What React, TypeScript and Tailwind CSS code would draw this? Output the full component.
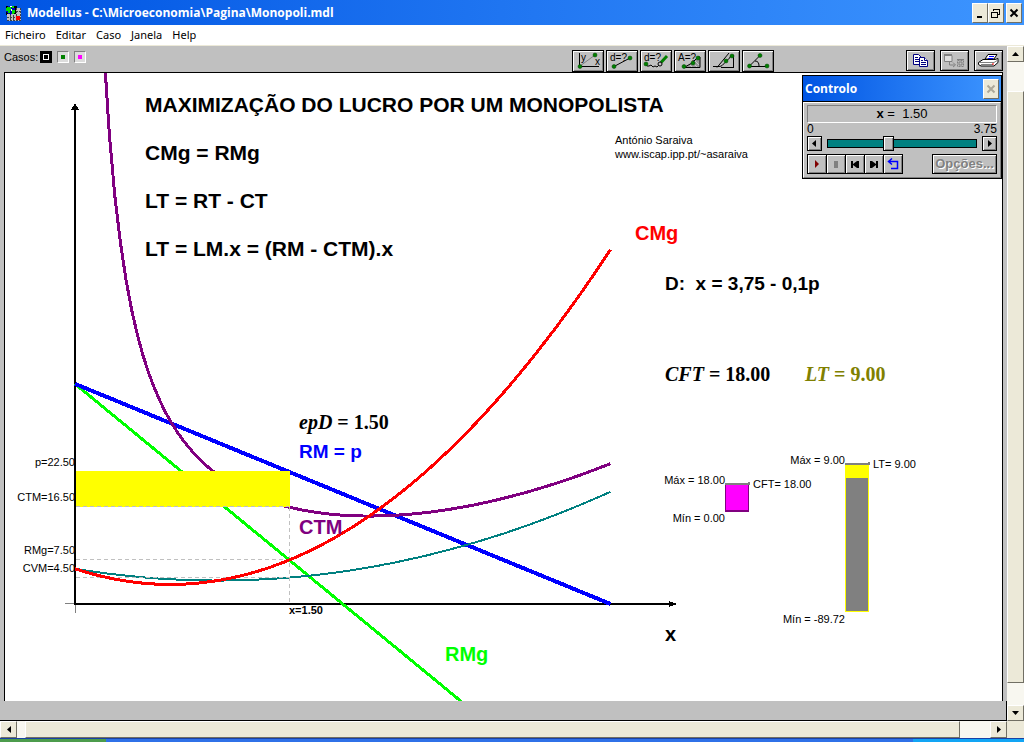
import React, { useState } from 'react'
import clsx from 'clsx'

const raised = 'border border-t-white border-l-white border-r-[#716f64] border-b-[#716f64] bg-[#ece9d8]'
const greyButton =
  'flex shrink-0 items-center justify-center border border-black bg-[#c0c0c0] shadow-[inset_1px_1px_0_#fff,inset_-1px_-1px_0_#808080]'

const menus = ['Ficheiro', 'Editar', 'Caso', 'Janela', 'Help']

// chart scale: pixels per unit and the position of the origin
const X0 = 75
const Y0 = 604
const SX = 142.8
const SY = 5.87

const plot = (fn: (x: number) => number, from: number, to: number) => {
  const points: string[] = []
  const steps = 90
  for (let i = 0; i <= steps; i++) {
    const x = from + ((to - from) * i) / steps
    points.push(`${(X0 + x * SX).toFixed(1)},${(Y0 - fn(x) * SY).toFixed(1)}`)
  }
  return points.join(' ')
}

const price = (x: number) => 37.5 - 10 * x
const marginalRevenue = (x: number) => 37.5 - 20 * x
const variableCost = (x: number) => 2 * x * x - 4 * x + 6
const totalCost = (x: number) => variableCost(x) + 18 / x
const marginalCost = (x: number) => 6 * x * x - 8 * x + 6

const headings = [
  { text: 'MAXIMIZAÇÃO DO LUCRO POR UM MONOPOLISTA', className: 'left-[140px] top-5 text-[21px] text-black' },
  { text: 'CMg = RMg', className: 'left-[140px] top-[68px] text-[21px] text-black' },
  { text: 'LT = RT - CT', className: 'left-[140px] top-[116px] text-[21px] text-black' },
  { text: 'LT = LM.x = (RM - CTM).x', className: 'left-[140px] top-[164px] text-[21px] text-black' },
  { text: 'CMg', className: 'left-[630px] top-[148px] text-[20px] text-[#ff0000]' },
  { text: 'D:  x = 3,75 - 0,1p', className: 'left-[660px] top-[199px] text-[19px] text-black' },
  { text: 'RM = p', className: 'left-[294px] top-[367px] text-[19px] text-[#0000ff]' },
  { text: 'CTM', className: 'left-[294px] top-[442px] text-[20px] text-[#800080]' },
  { text: 'RMg', className: 'left-[440px] top-[569px] text-[20px] text-[#00ff00]' },
  { text: 'x', className: 'left-[660px] top-[549px] text-[20px] text-black' },
]

const readouts = [
  { name: 'CFT', value: '18.00', className: 'left-[660px] top-[289px] text-black' },
  { name: 'LT', value: '9.00', className: 'left-[800px] top-[289px] text-[#808000]' },
  { name: 'epD', value: '1.50', className: 'left-[294px] top-[337px] text-black' },
]

const labels = [
  { text: 'António Saraiva', className: 'left-[610px] top-[61px]' },
  { text: 'www.iscap.ipp.pt/~asaraiva', className: 'left-[610px] top-[75px]' },
  { text: 'p=22.50', className: 'left-0 top-[383px] w-[70px] text-right' },
  { text: 'CTM=16.50', className: 'left-0 top-[418px] w-[70px] text-right' },
  { text: 'RMg=7.50', className: 'left-0 top-[471px] w-[70px] text-right' },
  { text: 'CVM=4.50', className: 'left-0 top-[489px] w-[70px] text-right' },
  { text: 'x=1.50', className: 'left-[284px] top-[531px] font-bold' },
  { text: 'Máx = 18.00', className: 'left-[620px] top-[401px] w-[100px] text-right' },
  { text: 'CFT= 18.00', className: 'left-[748px] top-[405px]' },
  { text: 'Mín = 0.00', className: 'left-[620px] top-[439px] w-[100px] text-right' },
  { text: 'Máx = 9.00', className: 'left-[740px] top-[381px] w-[100px] text-right' },
  { text: 'LT= 9.00', className: 'left-[868px] top-[385px]' },
  { text: 'Mín = -89.72', className: 'left-[740px] top-[540px] w-[100px] text-right' },
]

function AppIcon() {
  return (
    <svg width="16" height="16" viewBox="0 0 16 16" shapeRendering="crispEdges">
      <rect x="1" y="1" width="11" height="9" fill="#000" />
      <rect x="2" y="9" width="14" height="7" fill="#c0c0c0" />
      <rect x="11" y="3" width="5" height="12" fill="#c0c0c0" />
      <path d="M2 12.500h9M11 6.500h5M5.500 10v6M8.500 10v6M11.500 3v13M2 15.500h14M15.500 3v13" stroke="#404040" fill="none" strokeDasharray="2 1" />
      <circle cx="5.500" cy="5" r="4.500" fill="#0000c0" />
      <path d="M2 2h4v3H5v3H3V6H1V3zM7 1h2v2H7zM7 5h3v2L8 9H7z" fill="#00e000" />
      <path d="M5 1h2v1H5zM6 4h1v2H6z" fill="#fff" />
      <rect x="11" y="11" width="4" height="4" fill="#ff0000" />
    </svg>
  )
}

function Dot({ x, y }: { x: number; y: number }) {
  return <circle cx={x} cy={y} r="2" fill="#008000" stroke="#004000" strokeWidth="0.5" />
}

const glyph = 'text-[10px]'

const tools = [
  {
    name: 'Coordenadas',
    icon: (
      <>
        <path d="M7.500 3v13.500H27" stroke="#000" fill="none" shapeRendering="crispEdges" />
        <path d="M8 16L23 5" stroke="#808080" fill="none" />
        <text x="9" y="11" className={glyph}>y</text>
        <text x="23" y="15" className={glyph}>x</text>
        <Dot x={8} y={16.5} />
        <Dot x={23} y={5} />
      </>
    ),
  },
  {
    name: 'Distância',
    icon: (
      <>
        <text x="4" y="11" className={glyph}>d=?</text>
        <path d="M8 16.500L24 8" stroke="#000" fill="none" />
        <Dot x={8} y={16.5} />
        <Dot x={24} y={8} />
      </>
    ),
  },
  {
    name: 'Comprimento',
    icon: (
      <>
        <text x="4" y="11" className={glyph}>d=?</text>
        <path d="M5 14l2 2h2l2-1 2 2 2-1 2 1 2-2" stroke="#000" fill="none" />
        <path d="M21 12.500L27 6" stroke="#008000" strokeWidth="3" />
        <circle cx="20" cy="14" r="2" fill="#c0c0c0" stroke="#000" />
        <Dot x={6} y={14} />
      </>
    ),
  },
  {
    name: 'Área',
    icon: (
      <>
        <path d="M10 17.500L18 13l6-6h2v10.500z" fill="#999" stroke="#000" />
        <path d="M16 15l2 2M19 13l4 4M21 11l4 4" stroke="#ddd" strokeWidth="0.7" />
        <text x="4" y="11" className={glyph}>A=?</text>
        <Dot x={10} y={16.5} />
        <Dot x={19} y={13} />
        <Dot x={24} y={8} />
      </>
    ),
  },
  {
    name: 'Declive',
    icon: (
      <>
        <path d="M5 16.500h6c3 0 4-2 6-4s4-3 6-7M9 17.500L21 3" stroke="#000" fill="none" />
        <path d="M13 17.500h12.500V5" stroke="#000" fill="none" shapeRendering="crispEdges" />
        <Dot x={18} y={11} />
        <Dot x={24} y={6} />
      </>
    ),
  },
  {
    name: 'Ângulo',
    icon: (
      <>
        <path d="M18 5.500L7 16.500h18M13 11c3 0 4 2 4 5" stroke="#000" fill="none" />
        <Dot x={7.5} y={16} />
        <Dot x={18} y={5.5} />
        <Dot x={25} y={16} />
      </>
    ),
  },
]

const actions = [
  {
    name: 'Copiar',
    disabled: false,
    icon: (
      <g fill="#fff" stroke="#000080">
        <path d="M7.500 4.500h5l3 3v7h-8z" />
        <path d="M9 7.500h3M9 9.500h4M9 11.500h4" />
        <path d="M13.500 7.500h5l3 3v6h-8z" />
        <path d="M18.500 7.500v3h3M15 10.500h2M15 12.500h5M15 14.500h5" />
      </g>
    ),
  },
  {
    name: 'Transferir',
    disabled: true,
    icon: (
      <g fill="none" stroke="#808080">
        <path d="M5 5.500h7v6H4.500v-6" fill="#e0e0e0" />
        <path d="M4 5h8" strokeWidth="2" />
        <path d="M9.500 12v3h5M13 12.500l2.500 2.500-2.500 2" />
        <path d="M17.500 10.500h6v6h-6z" strokeDasharray="2 1" />
        <path d="M17 9.500h7M19 12h3v3h-3z" />
      </g>
    ),
  },
  {
    name: 'Imprimir',
    disabled: false,
    icon: (
      <g stroke="#000">
        <path d="M11 9l3-4.500h9L20 9z" fill="#fff" />
        <path d="M15 6.500h5M14 8.500h5" stroke="#0000ff" />
        <path d="M4.500 12.500L9 9.500h12l3-1v4L20 16H7l-2.500-1.500z" fill="#fff" />
        <path d="M5 12.500h15l4-2.500M7 14.500h12" fill="none" stroke="#808080" />
        <path d="M18 14h2" stroke="#ff0000" />
      </g>
    ),
  },
]

const players = [
  { name: 'Iniciar', icon: <path d="M6 4l4 4-4 4z" fill="#800000" /> },
  { name: 'Parar', icon: <path d="M6 5h4v7H6z" fill="#808080" /> },
  { name: 'Recuar', icon: <path d="M4 5h2v3l4-3h2v7h-2L6 9v3H4z" fill="#000" /> },
  { name: 'Avançar', icon: <path d="M4 5h2l4 3V5h2v7h-2V9l-4 3H4z" fill="#000" /> },
  { name: 'Repetir', icon: <path d="M7 2.500L3.500 5.500 7 8.500M4 5.500h8.500v7H6" fill="none" stroke="#0000ff" strokeWidth="1.5" /> },
]

function TitleBar() {
  return (
    <header className="flex h-[25px] shrink-0 items-center bg-linear-to-r from-[#0054e3] to-[#3d95ff] pr-[2px] pl-[5px]">
      <AppIcon />
      <h1 className="ml-[6px] flex-1 truncate font-['Open_Sans',sans-serif] text-[12px] font-bold text-white">
        Modellus - C:\Microeconomia\Pagina\Monopoli.mdl
      </h1>
      <button aria-label="Minimizar" className={clsx(raised, 'flex h-5 w-4 items-center justify-center')}>
        <svg width="12" height="14" viewBox="0 0 12 14"><path d="M3 10h5v2H3z" /></svg>
      </button>
      <button aria-label="Restaurar" className={clsx(raised, 'flex h-5 w-4 items-center justify-center')}>
        <svg width="12" height="14" viewBox="0 0 12 14" fill="none" stroke="#000" shapeRendering="crispEdges">
          <path d="M3.500 5V3.500h6v5H8M3 3h7M1.500 6.500h6v5h-6zM1 6h7" />
        </svg>
      </button>
      <button aria-label="Fechar" className={clsx(raised, 'ml-[2px] flex h-5 w-4 items-center justify-center')}>
        <svg width="12" height="14" viewBox="0 0 12 14"><path d="M2.500 3.500l7 7m0-7l-7 7" stroke="#000" strokeWidth="2" /></svg>
      </button>
    </header>
  )
}

function CaseBox({ name, color, active = false }: { name: string; color: string; active?: boolean }) {
  return (
    <button
      aria-label={name}
      className={clsx(
        'flex size-3 items-center justify-center border',
        active ? 'border-black bg-black' : 'border-t-[#808080] border-l-[#808080] border-r-white border-b-white bg-[#dcdcdc]'
      )}
    >
      <span className={clsx('block', color)} />
    </button>
  )
}

function Toolbar() {
  return (
    <div className="flex h-[26px] shrink-0 items-start bg-[#c0c0c0] pt-1 pr-1 pl-1">
      <div className="flex flex-1 items-center gap-[5px] pt-[1px]">
        <span className="-mr-[3px] text-[11px] leading-3">Casos:</span>
        <CaseBox name="Caso 1" active color="size-[6px] border border-white bg-black" />
        <CaseBox name="Caso 2" color="size-1 bg-[#008000]" />
        <CaseBox name="Caso 3" color="size-1 bg-[#ff00ff]" />
      </div>
      <div className="mr-[132px] flex gap-[2px]">
        {tools.map((tool) => (
          <button key={tool.name} aria-label={tool.name} className={clsx(greyButton, 'h-[22px] w-8')}>
            <svg width="30" height="20" viewBox="1 1 30 20">{tool.icon}</svg>
          </button>
        ))}
      </div>
      <div className="flex gap-[5px]">
        {actions.map((action) => (
          <button
            key={action.name}
            aria-label={action.name}
            disabled={action.disabled}
            className={clsx(greyButton, 'h-[21px] w-[29px]')}
          >
            <svg width="27" height="19" viewBox="1 1 27 19">{action.icon}</svg>
          </button>
        ))}
      </div>
    </div>
  )
}

function Chart() {
  return (
    <svg className="absolute top-0 left-0" width="997" height="628" viewBox="5 73 997 628" fill="none" shapeRendering="crispEdges">
      {/* eixos */}
      <path d="M65 603.500H75M75.500 604v9" stroke="#808080" />
      <path d="M75 604V108M74 604H672" stroke="#000" strokeWidth="2" />
      <path d="M75 103l-4 7h8zM677 604l-8-3v6z" fill="#000" />

      {/* curvas */}
      <polyline points={plot(marginalRevenue, 0, 2.75)} stroke="#00ff00" strokeWidth="3" />
      <polyline points={plot(price, 0, 3.75)} stroke="#0000ff" strokeWidth="4" />
      <polyline points={plot(totalCost, 0.2, 3.75)} stroke="#800080" strokeWidth="3" />
      <rect x="76" y="471" width="214" height="36" fill="#ffff00" />
      <polyline points={plot(variableCost, 0, 3.75)} stroke="#008080" strokeWidth="2" />

      <path d="M76 506.500H289M76 559.500H289M76 577.500H289M289.500 507V603" stroke="#c0c0c0" strokeDasharray="4 3" />
      <polyline points={plot(marginalCost, 0, 3.75)} stroke="#ff0000" strokeWidth="3" />

      {/* barra CFT */}
      <rect x="725" y="484" width="24" height="28" fill="#800080" />
      <rect x="726" y="485" width="22" height="25" fill="#ff00ff" />
      <path d="M725 484h24v-2" stroke="#808080" strokeWidth="2" />

      {/* barra LT */}
      <rect x="845" y="464" width="24" height="148" fill="#ffff00" />
      <rect x="846" y="478" width="22" height="133" fill="#808080" />
      <path d="M845 464h24v-2" stroke="#808080" strokeWidth="2" />
    </svg>
  )
}

function ControlWindow() {
  const [x, setX] = useState(1.5)

  return (
    <section className="absolute top-[2px] right-0 w-[200px] border border-black bg-[#c0c0c0]">
      <div className="flex h-[26px] items-center border-b border-black bg-linear-to-r from-[#0054e3] to-[#3d95ff] pr-[2px] pl-[2px]">
        <h2 className="flex-1 font-['Open_Sans',sans-serif] text-[12px] font-bold text-white">Controlo</h2>
        <button aria-label="Fechar controlo" className={clsx(raised, 'flex h-5 w-4 items-center justify-center')}>
          <svg width="12" height="14" viewBox="0 0 12 14"><path d="M2.500 3.500l7 7m0-7l-7 7" stroke="#aca899" strokeWidth="2" /></svg>
        </button>
      </div>
      <div className="border border-t-white border-l-white border-r-[#808080] border-b-[#808080] px-[3px] pt-[2px] pb-[3px]">
        <output
          htmlFor="x-value"
          className="block h-[18px] border border-t-[#808080] border-l-[#808080] border-r-white border-b-white text-center text-[13px] leading-4 whitespace-pre"
        >
          <b>x</b> =  {x.toFixed(2)}
        </output>
        <div className="flex justify-between text-[12px] leading-[13px]">
          <span>0</span>
          <span>3.75</span>
        </div>
        <div className="flex items-center gap-[5px]">
          <button aria-label="Diminuir x" onClick={() => setX(Math.max(0, x - 0.05))} className={clsx(greyButton, 'size-[15px]')}>
            <svg width="9" height="9" viewBox="0 0 9 9"><path d="M6 1v7L2 4.500z" /></svg>
          </button>
          <input
            id="x-value"
            aria-label="x"
            type="range"
            min="0"
            max="3.75"
            step="0.05"
            value={x}
            onChange={(e) => setX(Number(e.target.value))}
            className="h-[15px] min-w-0 flex-1 appearance-none bg-transparent [&::-webkit-slider-runnable-track]:h-[9px] [&::-webkit-slider-runnable-track]:border [&::-webkit-slider-runnable-track]:border-black [&::-webkit-slider-runnable-track]:bg-[#008080] [&::-webkit-slider-thumb]:-mt-1 [&::-webkit-slider-thumb]:h-[15px] [&::-webkit-slider-thumb]:w-[11px] [&::-webkit-slider-thumb]:appearance-none [&::-webkit-slider-thumb]:border [&::-webkit-slider-thumb]:border-black [&::-webkit-slider-thumb]:bg-[#c0c0c0] [&::-webkit-slider-thumb]:shadow-[inset_1px_1px_0_#fff,inset_-1px_-1px_0_#808080]"
          />
          <button aria-label="Aumentar x" onClick={() => setX(Math.min(3.75, x + 0.05))} className={clsx(greyButton, 'size-[15px]')}>
            <svg width="9" height="9" viewBox="0 0 9 9"><path d="M3 1v7l4-3.500z" /></svg>
          </button>
        </div>
        <div className="mt-[3px] flex justify-between">
          <div className="flex">
            {players.map((player) => (
              <button key={player.name} aria-label={player.name} className={clsx(greyButton, '-mr-px h-5 w-5')}>
                <svg width="16" height="16" viewBox="0 0 16 16">{player.icon}</svg>
              </button>
            ))}
          </div>
          <button
            disabled
            className={clsx(greyButton, 'h-5 w-[65px] text-[13px] font-bold text-[#808080] [text-shadow:1px_1px_0_#fff]')}
          >
            Opções...
          </button>
        </div>
      </div>
    </section>
  )
}

function Canvas() {
  return (
    <main className="relative min-h-0 flex-1 overflow-hidden border-t border-r border-l border-black bg-white">
      <Chart />
      {headings.map((item) => (
        <span key={item.text} className={clsx('absolute leading-6 font-bold whitespace-pre', item.className)}>
          {item.text}
        </span>
      ))}
      {readouts.map((item) => (
        <span
          key={item.name}
          className={clsx("absolute font-['Liberation_Serif',serif] text-[20px] leading-6 font-bold whitespace-nowrap", item.className)}
        >
          <i>{item.name}</i> = {item.value}
        </span>
      ))}
      {labels.map((item) => (
        <span key={item.text} className={clsx('absolute text-[11px] leading-3 whitespace-nowrap', item.className)}>
          {item.text}
        </span>
      ))}
      <ControlWindow />
    </main>
  )
}

function VerticalScroll() {
  return (
    <div className="flex w-[17px] shrink-0 flex-col bg-[#f8f7f0]">
      <button aria-label="Subir" className={clsx(raised, 'flex h-4 items-center justify-center')}>
        <svg width="9" height="8" viewBox="0 0 9 8"><path d="M1 6h7L4.500 2z" /></svg>
      </button>
      <div className="h-[29px]" />
      <div className={clsx(raised, 'flex-1')} />
      <div className="h-[22px]" />
      <button aria-label="Descer" className={clsx(raised, 'flex h-4 items-center justify-center')}>
        <svg width="9" height="8" viewBox="0 0 9 8"><path d="M1 2h7L4.500 6z" /></svg>
      </button>
    </div>
  )
}

function HorizontalScroll() {
  return (
    <div className="flex h-[17px] shrink-0 bg-[#f8f7f0]">
      <button aria-label="Esquerda" className={clsx(raised, 'flex w-[17px] items-center justify-center')}>
        <svg width="8" height="9" viewBox="0 0 8 9"><path d="M6 1v7L2 4.500z" /></svg>
      </button>
      <div className="w-2" />
      <div className={clsx(raised, 'flex-1')} />
      <div className="w-[30px]" />
      <button aria-label="Direita" className={clsx(raised, 'flex w-[17px] items-center justify-center')}>
        <svg width="8" height="9" viewBox="0 0 8 9"><path d="M2 1v7l4-3.500z" /></svg>
      </button>
      <div className="w-[17px] bg-[#ece9d8]" />
    </div>
  )
}

export default function App() {
  return (
    <div className="flex h-screen flex-col overflow-hidden bg-white font-['Liberation_Sans',sans-serif] text-black">
      <TitleBar />
      <nav className="flex h-[21px] shrink-0 items-center gap-[10px] border-b border-[#ece9d8] bg-white pl-[5px] font-['Noto_Sans',sans-serif] text-[11px]">
        {menus.map((menu) => (
          <button key={menu}>{menu}</button>
        ))}
      </nav>
      <div className="flex min-h-0 flex-1">
        <div className="flex min-w-0 flex-1 flex-col">
          <Toolbar />
          <div className="flex min-h-0 flex-1 bg-[#c0c0c0] pr-1 pl-1">
            <Canvas />
          </div>
          <div className="h-5 shrink-0 border-r border-b border-black bg-[#c0c0c0]" />
        </div>
        <VerticalScroll />
      </div>
      <HorizontalScroll />
      <footer className="flex h-1 shrink-0 border-t border-[#1941a5] bg-[#2f71e8]">
        <div className="w-[106px] bg-[#4c9c4c]" />
        <div className="flex-1" />
        <div className="w-[111px] bg-[#12a5f4]" />
      </footer>
    </div>
  )
}
